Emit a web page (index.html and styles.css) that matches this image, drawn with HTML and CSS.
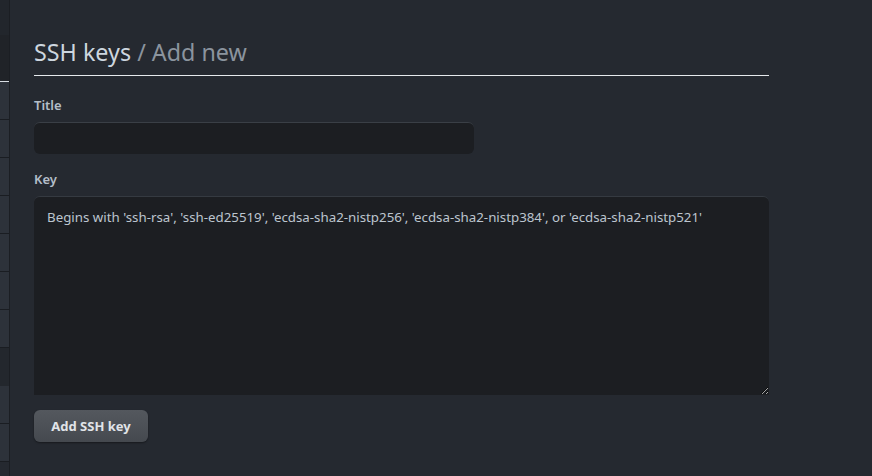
FILE: index.html
```html
<!DOCTYPE html>
<html>
<head>
<meta charset="utf-8">
<link rel="stylesheet" href="styles.css">
</head>
<body>
<div class="layout">
  <nav class="sidebar">
    <div class="side-top"></div>
    <div class="side-item active"></div>
    <div class="side-item"></div>
    <div class="side-item"></div>
    <div class="side-item"></div>
    <div class="side-item"></div>
    <div class="side-item"></div>
    <div class="side-item"></div>
    <div class="side-item"></div>
    <div class="side-gap"></div>
    <div class="side-item"></div>
    <div class="side-item"></div>
  </nav>
  <main class="main">
    <h1 class="heading"><span class="crumb">SSH keys</span> <span class="sub">/ Add new</span></h1>
    <form class="form">
      <label class="label">Title</label>
      <input class="input" type="text">
      <label class="label key-label">Key</label>
      <textarea class="textarea" placeholder="Begins with 'ssh-rsa', 'ssh-ed25519', 'ecdsa-sha2-nistp256', 'ecdsa-sha2-nistp384', or 'ecdsa-sha2-nistp521'"></textarea>
      <div class="actions"><button class="btn" type="button">Add SSH key</button></div>
    </form>
  </main>
</div>
</body>
</html>
```
FILE: styles.css
```css
html, body {
  margin: 0;
  padding: 0;
  background: #252930;
  height: 100%;
}
body {
  font-family: "Noto Sans", "Open Sans", sans-serif;
  color: #adbac7;
  overflow: hidden;
}
.layout {
  display: flex;
  height: 476px;
}
.sidebar {
  width: 9px;
  flex: none;
  border-right: 1px solid #1b1e23;
  display: flex;
  flex-direction: column;
}
.side-top {
  height: 35px;
  background: #22262c;
}
.side-item {
  height: 37px;
  background: #2d323a;
  border-bottom: 1px solid #1a1d22;
}
.side-item.active {
  height: 46px;
  background: #202328;
  border-bottom: 1px solid #d8dde3;
}
.side-gap {
  height: 38px;
  background: #23272d;
}
.main {
  flex: 1;
  padding: 0 0 0 24px;
}
.heading {
  width: 735px;
  margin: 34px 0 0 0;
  padding: 0 0 5px 0;
  border-bottom: 1px solid #e6e9ec;
  font-size: 23.3px;
  font-weight: 400;
  line-height: 36px;
}
.crumb {
  color: #cdd6df;
}
.sub {
  color: #8b949e;
}
.form {
  display: flex;
  flex-direction: column;
  padding-top: 19px;
}
.label {
  font-size: 13px;
  font-weight: 600;
  color: #b4bec9;
  line-height: 20px;
  margin-bottom: 7px;
}
.key-label {
  margin-top: 15px;
}
.input {
  width: 440px;
  height: 32px;
  box-sizing: border-box;
  background: #1c1e22;
  border: none;
  border-top: 1px solid #3a3f46;
  border-radius: 6px;
  outline: none;
}
.textarea {
  width: 735px;
  height: 199px;
  box-sizing: border-box;
  background: #1c1e22;
  border: none;
  border-top: 1px solid #353a41;
  border-radius: 6px 6px 0 0;
  padding: 10px 13px;
  font-family: "Noto Sans", "Open Sans", sans-serif;
  font-size: 13.3px;
  line-height: 20px;
  color: #c3ccd5;
  outline: none;
  resize: vertical;
}
.textarea::placeholder {
  color: #bcc5cf;
}
.actions {
  padding-top: 15px;
}
.btn {
  width: 114px;
  height: 32px;
  background: linear-gradient(#54585e, #45494f);
  border: none;
  border-radius: 6px;
  color: #e1e4e8;
  font-family: "Noto Sans", "Open Sans", sans-serif;
  font-size: 13px;
  font-weight: 700;
  box-shadow: 0 1px 2px rgba(0,0,0,0.4);
}
```
